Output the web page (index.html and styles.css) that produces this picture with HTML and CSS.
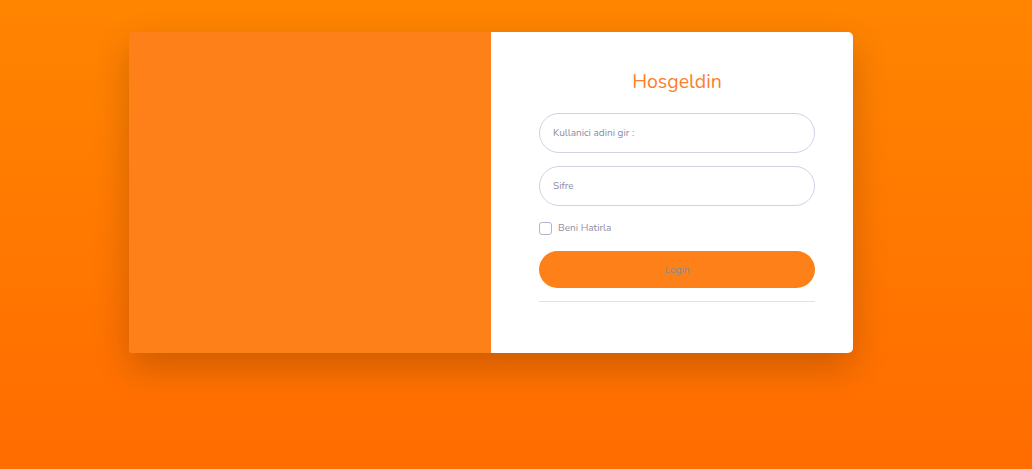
FILE: index.html
```html
<!DOCTYPE html>
<html lang="tr">
<head>
<meta charset="utf-8">
<title>Login</title>
<link rel="stylesheet" href="styles.css">
</head>
<body>
<div class="page">
  <div class="card">
    <div class="card-img"></div>
    <div class="card-body">
      <h5 class="card-title">Hosgeldin</h5>
      <form class="form-signin">
        <input class="form-control" type="text" placeholder="Kullanici adini gir :">
        <input class="form-control" type="password" placeholder="Sifre">
        <label class="check">
          <span class="box"></span>
          <span class="check-label">Beni Hatirla</span>
        </label>
        <button type="button" class="btn-login">Login</button>
        <hr class="divider">
      </form>
    </div>
  </div>
</div>
</body>
</html>
```
FILE: styles.css
```css
* { box-sizing: border-box; }
html, body { height: 100%; }
body {
  margin: 0;
  background: linear-gradient(to bottom, #ff8500 0%, #ff6c00 100%);
  font-family: "Nunito", "Lato", "Open Sans", sans-serif;
}
.page {
  padding: 32px 0 0 129px;
  display: flex;
}
.card {
  width: 724px;
  height: 321px;
  display: flex;
  border-radius: 5px;
  background: #fff;
  box-shadow: 0 14px 36px rgba(0, 0, 0, 0.2);
}
.card-img {
  width: 362px;
  background: #fd8019;
  border-radius: 2px 0 0 2px;
}
.card-body {
  flex: 1;
  padding: 38px 38px 0 48px;
  display: flex;
  flex-direction: column;
}
.card-title {
  margin: 0 0 19px;
  text-align: center;
  font-weight: 400;
  font-size: 19.5px;
  line-height: 24px;
  color: #fd7e2a;
}
.form-signin {
  display: flex;
  flex-direction: column;
}
.form-control {
  height: 40px;
  border: 1px solid #d2d0e4;
  border-radius: 20px;
  padding: 0 13px;
  font-family: inherit;
  font-size: 10px;
  color: #555;
  margin-bottom: 13px;
  outline: none;
}
.form-control::placeholder { color: #8b8aa3; }
.check {
  display: flex;
  align-items: center;
  gap: 6px;
  margin: 1px 0 15px;
  height: 16px;
}
.box {
  width: 13px;
  height: 13px;
  border: 1px solid #b6b4cc;
  border-radius: 3px;
  background: #fff;
}
.check-label {
  font-size: 10px;
  color: #8f8ea6;
}
.btn-login {
  height: 37px;
  border: none;
  border-radius: 19px;
  background: #fd8019;
  color: #8c8c8c;
  font-family: inherit;
  font-size: 10px;
  cursor: pointer;
}
.divider {
  margin: 13px 0 0;
  border: 0;
  border-top: 1px solid #e2e2e2;
}
```
